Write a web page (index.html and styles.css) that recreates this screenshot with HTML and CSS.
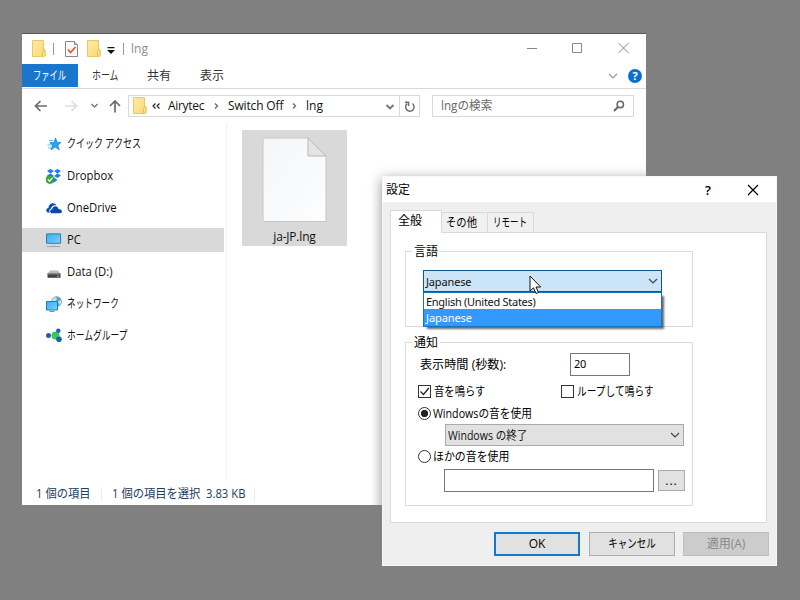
FILE: index.html
```html
<!DOCTYPE html>
<html lang="ja">
<head>
<meta charset="utf-8">
<title>設定</title>
<link rel="stylesheet" href="styles.css">
</head>
<body>
<svg width="0" height="0" class="defs" aria-hidden="true">
  <defs>
    <linearGradient id="fold" x1="0" y1="0" x2="1" y2="1"><stop offset="0" stop-color="#ffebaa"/><stop offset="1" stop-color="#f8d775"/></linearGradient>
    <linearGradient id="screen" x1="0" y1="0" x2="1" y2="1"><stop offset="0" stop-color="#35aef2"/><stop offset="1" stop-color="#7bd0ff"/></linearGradient>
    <linearGradient id="sheet" x1="0" y1="0" x2="1" y2="1"><stop offset="0" stop-color="#f5f6f8"/><stop offset=".5" stop-color="#f7f9fb"/><stop offset="1" stop-color="#fdfdfd"/></linearGradient>
    <symbol id="folder" viewBox="0 0 14 17"><path d="M.5.5h11v9.500h1.500v5.500l-1 1H.5z" fill="url(#fold)" stroke="#ecc95c"/><path d="M10.500 15.500v-4l1-1.500h1.500v5.500l-1 1z" fill="#ffe48c" stroke="#e2b93f" stroke-width=".8"/></symbol>
    <symbol id="chev" viewBox="0 0 10 6"><path d="M1 1l4 4 4-4" fill="none" stroke="currentColor" stroke-width="1.200"/></symbol>
  </defs>
</svg>

<section class="explorer">
  <header class="titlebar">
    <svg class="fold1" width="14" height="17"><use href="#folder"/></svg>
    <i class="sep s1"></i>
    <svg class="props" width="13" height="16" viewBox="0 0 13 16"><path d="M.5.5h9l3 3v12H.5z" fill="#f8f8f8" stroke="#888"/><path d="M9.500.5v3h3" fill="#ddd" stroke="#888"/><path d="M3 8.500l2.500 3L10.500 6" fill="none" stroke="#e8501c" stroke-width="1.500"/></svg>
    <svg class="fold2" width="14" height="17"><use href="#folder"/></svg>
    <svg class="drop" width="8" height="7" viewBox="0 0 8 7"><path d="M.5 0h7v1.300h-7zM0 3h8L4 7z" fill="#111"/></svg>
    <i class="sep s2"></i>
    <span class="wtitle">lng</span>
    <svg class="winbtns" width="103" height="12" viewBox="0 0 103 12" fill="none" stroke="#888"><path d="M0 6.500h10M45.500 1.500h9v9h-9zM91.500 1l10 10M101.500 1l-10 10"/></svg>
  </header>
  <nav class="ribbon">
    <div class="file"><span class="t k69">ファイル</span></div>
    <span class="t rt1 k74">ホーム</span>
    <span class="t rt2">共有</span>
    <span class="t rt3">表示</span>
    <svg class="expand" width="10" height="6"><use href="#chev"/></svg>
    <span class="help">?</span>
  </nav>
  <div class="address">
    <svg class="arrows" width="88" height="14" viewBox="0 0 88 14" fill="none"><path d="M13 7H2M6.500 2L1.500 7l5 5" stroke="#6b6b6b" stroke-width="1.700"/><path d="M31 7h11M37.500 2l5 5-5 5" stroke="#ddd" stroke-width="1.700"/><path d="M57.500 5l3 3 3-3" stroke="#777" stroke-width="1.400"/><path d="M81 13.500V2M76 7l5-5 5 5" stroke="#6b6b6b" stroke-width="1.700"/></svg>
    <div class="crumbs">
      <svg class="cf" width="14" height="17"><use href="#folder"/></svg>
      <svg class="back" width="8" height="8" viewBox="0 0 8 8" fill="none" stroke="#222" stroke-width="1.200"><path d="M3.500 1.500L1 4l2.500 2.500M7.500 1.500L5 4l2.500 2.500"/></svg>
      <span class="c1">Airytec</span>
      <svg class="gt" width="5" height="8" viewBox="0 0 5 8" fill="none" stroke="#666" stroke-width="1.300"><path d="M1 1.500L3.500 4 1 6.500"/></svg>
      <span class="c2">Switch Off</span>
      <svg class="gt" width="5" height="8" viewBox="0 0 5 8" fill="none" stroke="#666" stroke-width="1.300"><path d="M1 1.500L3.500 4 1 6.500"/></svg>
      <span class="c3">lng</span>
      <svg class="cdown" width="10" height="6" viewBox="0 0 10 6"><path d="M1.500 1L5 4.500 8.500 1" fill="none" stroke="#777" stroke-width="1.900"/></svg>
      <div class="refresh"><svg width="12" height="13" viewBox="0 0 12 13" fill="none" stroke="#6f6f6f" stroke-width="1.500"><path d="M8.300 3.500A4.200 4.200 0 1 1 3.200 3.700M4.600 6V2.300M1 2.300h4.300"/></svg></div>
    </div>
    <div class="search"><span class="t ks">lngの検索</span><svg width="12" height="12" viewBox="0 0 12 12" fill="none" stroke="#666"><circle cx="7.300" cy="4.500" r="3.200" stroke-width="1.500"/><path d="M5 7L1 11" stroke-width="1.900"/></svg></div>
  </div>
  <div class="content">
    <ul class="tree">
      <li><svg width="16" height="16" viewBox="0 0 16 16"><path d="M9.500 2l1.600 4.400H15l-3.200 2.900 1.500 4.500-4.100-2.700L5 13.800l1.500-4.500L4 6.700l4-.3z" fill="#28a3ee" stroke="#147cc5" stroke-width=".7"/><path d="M3 4.500h4M1.500 9h4M2 12h3" stroke="#5ebcf2"/></svg><span class="t k75">クイック アクセス</span></li>
      <li><svg width="16" height="16" viewBox="0 0 16 16"><path d="M1 3l3.500-2L8 3 4.500 5.500zM8 3l3.500-2L15 3l-3.500 2.500zM1 7.500l3.500-2L8 8l-3.500 2zM8 8l3.500-2.500 3.500 2L11.500 10zM5 12l3-2.500 3.500 2.500L8 14.500z" fill="#1682e5"/><circle cx="4" cy="11.500" r="4" fill="#3daa42" stroke="#258530" stroke-width=".6"/><path d="M1.800 11.500l1.700 1.800 3-3.600" fill="none" stroke="#fff" stroke-width="1.300"/></svg><span class="t k94">Dropbox</span></li>
      <li><svg width="16" height="16" viewBox="0 0 16 16"><path d="M1.500 12.500C-.7 11 0 8.500 2.500 8c0-5 6-6.500 8-2.500-3-.8-5 .7-5.500 3-2.200 1-2 3-1 4z" fill="#094ab2"/><path d="M5.500 13.300C3.300 12 4 9.300 6.200 9.300 6.500 5.700 11.700 5.200 12.500 9c4 0 4.500 4.300 1.500 4.300z" fill="#094ab2"/></svg><span class="t k94">OneDrive</span></li>
      <li class="on"><svg width="17" height="16" viewBox="0 0 17 16"><path d="M.5 1.500h15v10H.5z" fill="url(#screen)" stroke="#2878ac"/><path d="M1 15h14" stroke="#8fa3b0"/><path d="M6 13h4" stroke="#b9c8d0"/></svg><span class="t k94">PC</span></li>
      <li><svg width="16" height="16" viewBox="0 0 16 16"><path d="M4 6.500h8L14.500 10h-13z" fill="#bbb"/><path d="M1.500 9.500h13v4.300h-13z" fill="#444"/><path d="M1.500 9.500h13v1h-13z" fill="#888"/><path d="M11 12.200h2" stroke="#55e27c"/></svg><span class="t k94">Data (D:)</span></li>
      <li><svg width="16" height="16" viewBox="0 0 16 16"><circle cx="10.500" cy="5.500" r="5.200" fill="#5a9dc5"/><path d="M7 2l3-1 1 2-2 3-3-1zM12 5l3-1v3l-2 2z" fill="#b9e2ee"/><path d="M.5 5.500h11v8.500H.5z" fill="url(#screen)" stroke="#1b7dbb"/><path d="M3.500 15.500h5" stroke="#7694a5"/></svg><span class="t k72">ネットワーク</span></li>
      <li><svg width="16" height="16" viewBox="0 0 16 16"><circle cx="2.500" cy="7.500" r="2.500" fill="#1c5fb4"/><circle cx="9.500" cy="7.500" r="4" fill="#3cc65a"/><circle cx="12.300" cy="2.800" r="2.200" fill="#1c5fb4"/><circle cx="13" cy="11.200" r="2.800" fill="#1c5fb4"/></svg><span class="t k73">ホームグループ</span></li>
    </ul>
    <div class="files">
      <figure class="tile">
        <svg width="65" height="86" viewBox="0 0 65 86"><path d="M1 1h45l18 18v65.500H1z" fill="url(#sheet)" stroke="#c5c7c9"/><path d="M46 1v18h18z" fill="#e4e4e5" stroke="#b9b9b9"/></svg>
        <figcaption>ja-JP.lng</figcaption>
      </figure>
    </div>
  </div>
  <footer class="status"><span class="t st1">1 個の項目</span><i class="bar"></i><span class="t st2">1 個の項目を選択</span><span class="t st3">3.83 KB</span><i class="bar"></i></footer>
</section>

<section class="dialog">
  <header class="dtitle"><span class="t">設定</span><span class="q">?</span><svg width="12" height="12" viewBox="0 0 12 12" stroke="#000" stroke-width="1.200"><path d="M1 1l10 10M11 1L1 11"/></svg></header>
  <div class="tabs">
    <div class="tab active"><span class="t">全般</span></div>
    <div class="tab"><span class="t k86">その他</span></div>
    <div class="tab"><span class="t k70">リモート</span></div>
  </div>
  <div class="panel">
    <fieldset class="lang">
      <legend>言語</legend>
      <div class="combo open">
        <span>Japanese</span><svg width="10" height="6"><use href="#chev"/></svg>
        <ul class="options"><li>English (United States)</li><li class="sel">Japanese</li></ul>
      </div>
    </fieldset>
    <fieldset class="notify">
      <legend>通知</legend>
      <div class="row time"><span class="t kt">表示時間 (秒数):</span><div class="field num">20</div></div>
      <div class="row checks">
        <i class="box"><svg width="11" height="11" viewBox="0 0 11 11"><path d="M1.500 5.500l3 3L9.800 2" fill="none" stroke="#222" stroke-width="1.200"/></svg></i><span class="t k85">音を鳴らす</span>
        <i class="box loop"></i><span class="t k81">ループして鳴らす</span>
      </div>
      <div class="row r1"><i class="radio on"></i><span class="t kw">Windowsの音を使用</span></div>
      <div class="combo snd"><span class="t ke">Windows の終了</span><svg width="10" height="6"><use href="#chev"/></svg></div>
      <div class="row r2"><i class="radio"></i><span class="t k90">ほかの音を使用</span></div>
      <div class="row path"><div class="field"></div><div class="browse">...</div></div>
    </fieldset>
  </div>
  <footer class="buttons">
    <div class="btn ok">OK</div>
    <div class="btn"><span class="t mid k77">キャンセル</span></div>
    <div class="btn off"><span class="t mid">適用(A)</span></div>
  </footer>
</section>
<svg class="cursor" width="13" height="20" viewBox="0 0 13 20"><path d="M1 1v15l3.500-3.200L7 18.500l2.500-1L7 12h4.700z" fill="#fff" stroke="#111"/></svg>
</body>
</html>
```
FILE: styles.css
```css
* { box-sizing: border-box; }
html, body { height: 100%; }
body {
  margin: 0; position: relative; overflow: hidden; background: #808080; color: #111;
  font: 12px/16px "Open Sans", "Noto Sans CJK JP", sans-serif;
}
svg { display: block; flex: none; }
.defs { position: absolute; }
ul { list-style: none; margin: 0; padding: 0; }
.t { display: inline-block; white-space: nowrap; transform-origin: 0 50%; }
.mid { transform-origin: 50% 50%; }
.k69 { transform: scaleX(.69); }
.k70 { transform: scaleX(.71); }
.k72 { transform: scaleX(.72); }
.k73 { transform: scaleX(.73); }
.k74 { transform: scaleX(.74); }
.k75 { transform: scaleX(.75); }
.k77 { transform: scaleX(.79); }
.k81 { transform: scaleX(.81); }
.k85 { transform: scaleX(.86); }
.k86 { transform: scaleX(.86); }
.k90 { transform: scaleX(.91); }
.k94 { transform: scaleX(.94); }
.ks { transform: scaleX(.97); }
.kt { transform: scaleX(1.010); }
.kw { transform: scaleX(.89); }
.ke { transform: scaleX(.88); }

/* explorer window */
.explorer {
  position: absolute; left: 22px; top: 33px; width: 624px; height: 472px; overflow: hidden;
  background: #fff; border-top: 1px solid #355f7c; display: flex; flex-direction: column;
}
/* shadow the dialog casts on this window */
.explorer::after {
  content: ""; position: absolute; left: 360px; top: 142px; width: 395px; height: 390px;
  box-shadow: 0 3px 12px rgba(0,0,0,.45);
}
.titlebar { height: 30px; display: flex; align-items: center; padding: 0 16px 0 10px; }
.fold1, .fold2 { margin-top: -2px; }
.sep { width: 1px; height: 12px; background: #999; margin-top: -1px; }
.s1 { margin: -1px 11px 0 7px; }
.props { margin-top: -1px; }
.fold2 { margin-left: 9px; }
.drop { margin: 2px 8px 0 6px; }
.wtitle { margin-left: 7px; color: #8c8c8c; }
.winbtns { margin: -3px 0 0 auto; }
.ribbon { height: 25px; border-bottom: 1px solid #d9d9d9; display: flex; align-items: center; color: #333; position: relative; }
.file { width: 56px; height: 23px; margin-top: -1px; background: #1a76cb; color: #fff; padding: 4px 0 0 11px; }
.rt1 { width: 26px; margin-left: 14px; }
.rt2 { margin-left: 29px; }
.rt3 { margin-left: 29px; }
.expand { margin-left: auto; color: #999; }
.help { width: 14px; height: 14px; margin: 0 4px 0 10px; border-radius: 50%; background: #0a72ce; color: #fff; text-align: center; font: bold 11px/14px "Open Sans", sans-serif; }
.address { height: 34px; display: flex; align-items: center; padding: 0 12px 0 12px; }
.crumbs { width: 292px; height: 22px; margin-left: 6px; border: 1px solid #d9d9d9; display: flex; align-items: center; }
.cf { margin: -2px 0 0 4px; }
.back { margin: 0 8px 0 5px; }
.gt { margin: 0 9px 0 10px; }
.crumbs span { white-space: nowrap; }
.c1 { width: 36px; letter-spacing: -.3px; }
.c2 { width: 54px; letter-spacing: -.15px; }
.cdown { margin: 2px 4px 0 auto; }
.refresh { width: 20px; height: 20px; border-left: 1px solid #d9d9d9; display: grid; place-items: center; }
.search { width: 202px; height: 22px; margin-left: 12px; border: 1px solid #d9d9d9; display: flex; align-items: center; justify-content: space-between; padding: 0 8px 0 8px; color: #666; }
.content { flex: 1; display: flex; min-height: 0; }
.tree { width: 205px; border-right: 1px solid #f2f2f2; padding-top: 9px; }
.tree li { width: 202px; height: 24px; margin-bottom: 8px; padding-left: 24px; display: flex; align-items: center; gap: 5px; }
.tree li svg { width: 16px; }
.tree .on { background: #d9d9d9; }
.files { padding: 7px 0 0 15px; }
.tile { width: 105px; height: 116px; margin: 0; padding-top: 7px; background: #d9d9d9; display: flex; flex-direction: column; align-items: center; }
.tile figcaption { margin-top: 6px; letter-spacing: -.2px; }
.status { height: 24px; padding: 2px 0 0 14px; display: flex; align-items: center; color: #223c5c; }
.bar { width: 1px; height: 14px; background: #ececec; }
.st1 { width: 65px; }
.st1, .st2, .st3 { transform: scaleX(.94); }
.st2 { margin-left: 10px; width: 94px; }
.st3 { width: 48px; }

/* settings dialog */
.dialog {
  position: absolute; left: 382px; top: 176px; width: 395px; height: 390px; background: #efefef;
  border: 1px solid #f8f8f8; display: flex; flex-direction: column; color: #000;
}
.dtitle { height: 25px; background: #fff; display: flex; align-items: center; padding: 0 17px 0 3px; }
.q { margin: 0 36px 0 auto; font-weight: 600; font-size: 13px; }
.tabs { height: 30px; padding: 8px 0 0 7px; display: flex; align-items: flex-end; }
.tab { height: 20px; width: 46px; padding: 2px 0 0 5px; border: 1px solid #d9d9d9; border-left: 0; border-bottom: 0; background: #f0f0f0; }
.tab + .tab { padding-left: 4px; }
.tab:last-child { padding-left: 5px; }
.tab.active { width: 52px; height: 23px; margin-bottom: -1px; padding: 2px 0 0 7px; border-left: 1px solid #d9d9d9; background: #fff; z-index: 1; }
.panel { width: 377px; height: 291px; margin-left: 7px; background: #fff; border: 1px solid #d9d9d9; padding: 10px 0 0 14px; }
fieldset { width: 288px; margin: 0; min-width: 0; border: 1px solid #dcdcdc; padding: 0; }
legend { height: 16px; line-height: 18px; margin-left: 6px; padding: 0 2px; }
.lang { height: 84px; }
.lang .combo { margin: 11px 0 0 17px; }
.notify { height: 172px; margin-top: 7px; }
.notify legend { line-height: 17px; }
.row { display: flex; align-items: center; }
.combo { position: relative; width: 239px; height: 22px; display: flex; align-items: center; justify-content: space-between; padding: 0 3px 0 2px; border: 1px solid #aaa; background: #e1e1e1; color: #444; }
.combo > span { color: #111; }
.combo.open { border-color: #155587; background: #cce4f7; font: 11px/16px "Noto Sans", sans-serif; }
.combo.open > span { padding-top: 2px; letter-spacing: -.15px; }
.options { position: absolute; left: -1px; top: 21px; width: 239px; height: 35px; border: 1px solid #1475bd; background: #fff; box-shadow: 3px 3px 2px -1px rgba(0,0,0,.6); z-index: 2; color: #111; }
.options li { height: 16px; line-height: 18px; padding-left: 2px; letter-spacing: -.28px; }
.options .sel { height: 17px; background: #3399ff; color: #fff; letter-spacing: -.1px; }
.time { height: 23px; margin: 3px 0 0 14px; }
.kt { width: 150px; }
.field { border: 1px solid #777; background: #fff; height: 23px; width: 210px; }
.num { width: 60px; padding: 2px 0 0 3px; font: 11px/15px "Noto Sans", sans-serif; letter-spacing: -.3px; }
.checks { height: 16px; margin: 7px 0 0 12px; }
.checks .t { padding-top: 1px; }
.box { width: 13px; height: 13px; border: 1px solid #333; margin-right: 3px; flex: none; }
.checks .k85 { width: 51px; }
.loop { margin-left: 76px; }
.radio { width: 13px; height: 13px; border: 1px solid #333; border-radius: 50%; margin-right: 2px; flex: none; }
.radio.on { background: radial-gradient(circle, #222 0 3.3px, #fff 4px); }
.r1 { height: 16px; margin: 6px 0 0 12px; }
.r1 .t, .r2 .t { padding-top: 1px; }
.snd { margin: 3px 0 0 39px; }
.snd .t { padding-top: 1px; }
.r2 { height: 16px; margin: 2px 0 0 12px; }
.path { margin: 5px 0 0 38px; }
.browse { width: 27px; height: 21px; margin-left: 4px; border: 1px solid #aaa; background: #e1e1e1; text-align: center; line-height: 19px; letter-spacing: 1px; }
.buttons { display: flex; margin: 9px 0 0 111px; }
.btn { width: 86px; height: 24px; border: 1px solid #adadad; background: #e1e1e1; text-align: center; line-height: 22px; margin-right: 8px; }
.btn.ok { border: 2px solid #1079cf; line-height: 20px; margin-right: 9px; }
.btn.off { background: #ccc; border-color: #bfbfbf; color: #888; margin-right: 0; }
.cursor { position: absolute; left: 529px; top: 275px; z-index: 5; }
```
